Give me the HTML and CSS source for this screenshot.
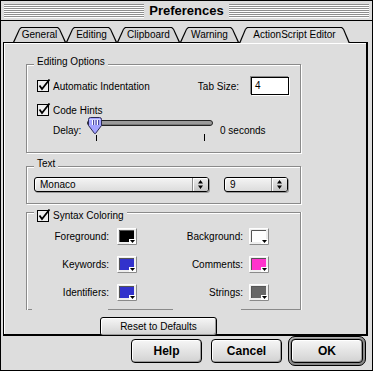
FILE: index.html
```html
<!DOCTYPE html>
<html>
<head>
<meta charset="utf-8">
<title>Preferences</title>
<link rel="stylesheet" href="styles.css">
</head>
<body>
<div class="window">
  <div class="titlebar">
    <div class="stripes"></div>
    <div class="title">Preferences</div>
    <div class="stripes"></div>
  </div>
  <div class="tabbar">
    <div class="tab t-general">General</div>
    <div class="tab t-editing">Editing</div>
    <div class="tab t-clipboard">Clipboard</div>
    <div class="tab t-warning">Warning</div>
    <div class="tab t-as active">ActionScript Editor</div>
  </div>
  <div class="pane">
    <section class="group g-editing">
      <div class="group-title">Editing Options</div>
      <div class="row row1">
        <label class="check">
          <svg class="cb" viewBox="0 0 14 14" width="14" height="14"><rect x="0.5" y="1.5" width="11" height="11" fill="#eeeeee" stroke="#000"/><path d="M2.5 6.5 L5 10 L12.5 0.5" fill="none" stroke="#000" stroke-width="1.8"/></svg>
          <span>Automatic Indentation</span>
        </label>
        <span class="lbl tabsize">Tab Size:</span>
        <span class="field">4</span>
      </div>
      <div class="row row2">
        <label class="check">
          <svg class="cb" viewBox="0 0 14 14" width="14" height="14"><rect x="0.5" y="1.5" width="11" height="11" fill="#eeeeee" stroke="#000"/><path d="M2.5 6.5 L5 10 L12.5 0.5" fill="none" stroke="#000" stroke-width="1.8"/></svg>
          <span>Code Hints</span>
        </label>
      </div>
      <div class="row slider-row">
        <span class="lbl delay">Delay:</span>
        <svg class="slider" viewBox="0 0 128 26" width="128" height="26">
          <rect x="0.5" y="3.5" width="125" height="5" rx="2.5" fill="#9a9a9a" stroke="#222"/>
          <path d="M1.5 7.5 H124" stroke="#777"/>
          <path d="M3.5 0.5 H12.5 Q14.5 0.5 14.5 2.5 V8.5 L8.5 16.5 H7.5 L1.5 8.5 V2.5 Q1.5 0.5 3.5 0.5 Z" fill="#a3a3ff" stroke="#2a2a55"/>
          <path d="M2.5 2.5 H13.5" stroke="#d0d0ff"/>
          <path d="M5.5 3 V8 M8 3 V8 M10.5 3 V8" stroke="#ffffff"/>
          <path d="M6.5 3 V8 M9 3 V8 M11.5 3 V8" stroke="#4a4a99"/>
          <path d="M9.5 18 V24 M117.5 17 V24" stroke="#000"/>
        </svg>
        <span class="lbl secs">0 seconds</span>
      </div>
    </section>

    <section class="group g-text">
      <div class="group-title">Text</div>
      <div class="popups">
        <div class="popup p-font">
          <span class="popup-val">Monaco</span>
          <span class="popup-arrow"><svg viewBox="0 0 5 9" width="5" height="9"><path d="M2.5 0 L5 3.5 H0 Z M0 5.5 H5 L2.5 9 Z" fill="#000"/></svg></span>
        </div>
        <div class="popup p-size">
          <span class="popup-val">9</span>
          <span class="popup-arrow"><svg viewBox="0 0 5 9" width="5" height="9"><path d="M2.5 0 L5 3.5 H0 Z M0 5.5 H5 L2.5 9 Z" fill="#000"/></svg></span>
        </div>
      </div>
    </section>

    <section class="group g-syntax">
      <label class="group-title check">
        <svg class="cb" viewBox="0 0 14 14" width="14" height="14"><rect x="0.5" y="1.5" width="11" height="11" fill="#eeeeee" stroke="#000"/><path d="M2.5 6.5 L5 10 L12.5 0.5" fill="none" stroke="#000" stroke-width="1.8"/></svg>
        <span>Syntax Coloring</span>
      </label>
      <div class="swatches">
        <span class="sw-label">Foreground:</span>
        <svg class="swatch c-black" viewBox="0 0 20 17" width="20" height="17"><rect x="0" y="0" width="20" height="17" fill="#eeeeee"/><path d="M0.5 16.5 V0.5 H19.5" fill="none" stroke="#fff"/><path d="M0.5 16.5 H19.5 V0.5" fill="none" stroke="#8a8a8a"/><rect x="2" y="2" width="15" height="12" fill="currentColor"/><path d="M2.5 14 V2.5 H17" fill="none" stroke="#555"/><rect x="12" y="11" width="7" height="5" fill="#fff"/><path d="M13 12 H18 L15.5 15 Z" fill="#000"/></svg>
        <span class="sw-label">Background:</span>
        <svg class="swatch c-white" viewBox="0 0 20 17" width="20" height="17"><rect x="0" y="0" width="20" height="17" fill="#eeeeee"/><path d="M0.5 16.5 V0.5 H19.5" fill="none" stroke="#fff"/><path d="M0.5 16.5 H19.5 V0.5" fill="none" stroke="#8a8a8a"/><rect x="2" y="2" width="15" height="12" fill="currentColor"/><path d="M2.5 14 V2.5 H17" fill="none" stroke="#555"/><rect x="12" y="11" width="7" height="5" fill="#fff"/><path d="M13 12 H18 L15.5 15 Z" fill="#000"/></svg>
        <span class="sw-label">Keywords:</span>
        <svg class="swatch c-blue" viewBox="0 0 20 17" width="20" height="17"><rect x="0" y="0" width="20" height="17" fill="#eeeeee"/><path d="M0.5 16.5 V0.5 H19.5" fill="none" stroke="#fff"/><path d="M0.5 16.5 H19.5 V0.5" fill="none" stroke="#8a8a8a"/><rect x="2" y="2" width="15" height="12" fill="currentColor"/><path d="M2.5 14 V2.5 H17" fill="none" stroke="#555"/><rect x="12" y="11" width="7" height="5" fill="#fff"/><path d="M13 12 H18 L15.5 15 Z" fill="#000"/></svg>
        <span class="sw-label">Comments:</span>
        <svg class="swatch c-pink" viewBox="0 0 20 17" width="20" height="17"><rect x="0" y="0" width="20" height="17" fill="#eeeeee"/><path d="M0.5 16.5 V0.5 H19.5" fill="none" stroke="#fff"/><path d="M0.5 16.5 H19.5 V0.5" fill="none" stroke="#8a8a8a"/><rect x="2" y="2" width="15" height="12" fill="currentColor"/><path d="M2.5 14 V2.5 H17" fill="none" stroke="#555"/><rect x="12" y="11" width="7" height="5" fill="#fff"/><path d="M13 12 H18 L15.5 15 Z" fill="#000"/></svg>
        <span class="sw-label">Identifiers:</span>
        <svg class="swatch c-blue" viewBox="0 0 20 17" width="20" height="17"><rect x="0" y="0" width="20" height="17" fill="#eeeeee"/><path d="M0.5 16.5 V0.5 H19.5" fill="none" stroke="#fff"/><path d="M0.5 16.5 H19.5 V0.5" fill="none" stroke="#8a8a8a"/><rect x="2" y="2" width="15" height="12" fill="currentColor"/><path d="M2.5 14 V2.5 H17" fill="none" stroke="#555"/><rect x="12" y="11" width="7" height="5" fill="#fff"/><path d="M13 12 H18 L15.5 15 Z" fill="#000"/></svg>
        <span class="sw-label">Strings:</span>
        <svg class="swatch c-gray" viewBox="0 0 20 17" width="20" height="17"><rect x="0" y="0" width="20" height="17" fill="#eeeeee"/><path d="M0.5 16.5 V0.5 H19.5" fill="none" stroke="#fff"/><path d="M0.5 16.5 H19.5 V0.5" fill="none" stroke="#8a8a8a"/><rect x="2" y="2" width="15" height="12" fill="currentColor"/><path d="M2.5 14 V2.5 H17" fill="none" stroke="#555"/><rect x="12" y="11" width="7" height="5" fill="#fff"/><path d="M13 12 H18 L15.5 15 Z" fill="#000"/></svg>
      </div>
    </section>

    <div class="reset-row"><button class="btn reset">Reset to Defaults</button></div>
  </div>
  <div class="footer">
    <button class="btn big b-help">Help</button>
    <button class="btn big b-cancel">Cancel</button>
    <span class="default-ring"><button class="btn big b-ok">OK</button></span>
  </div>
</div>
</body>
</html>
```
FILE: styles.css
```css
* { box-sizing: border-box; }
html, body { margin: 0; padding: 0; }
body {
  width: 373px;
  height: 371px;
  background: #dddddd;
  font-family: "Liberation Sans", Arial, sans-serif;
  font-size: 10px;
  color: #000;
  overflow: hidden;
}
.window {
  width: 373px;
  height: 371px;
  border: 1px solid #000;
  background: #dddddd;
  display: flex;
  flex-direction: column;
}

/* title bar */
.titlebar {
  height: 20px;
  flex: none;
  display: flex;
  align-items: flex-start;
  padding: 3px 3px 0 3px;
  border-bottom: 1px solid #000;
}
.stripes {
  flex: 1;
  height: 14px;
  background: repeating-linear-gradient(to bottom, #8e8e8e 0 1px, #ffffff 1px 2px);
}
.title {
  font-weight: bold;
  font-size: 13px;
  line-height: 14px;
  padding: 0 5px;
}

/* tabs */
.tabbar {
  flex: none;
  height: 21px;
  display: flex;
  align-items: flex-end;
  padding-left: 12px;
}
.tab {
  position: relative;
  isolation: isolate;
  flex: none;
  height: 15px;
  line-height: 15px;
  text-align: center;
  font-size: 10px;
}
.tab::before,
.tab::after {
  content: "";
  position: absolute;
  inset: 0;
  z-index: -1;
}
.tab::before {
  background: #000;
  clip-path: polygon(0 100%, 6px 2px, 8px 0, calc(100% - 8px) 0, calc(100% - 6px) 2px, 100% 100%);
}
.tab::after {
  background: #d6d6d6;
  clip-path: polygon(1.4px 100%, 7px 2.6px, 8.6px 1px, calc(100% - 8.6px) 1px, calc(100% - 7px) 2.6px, calc(100% - 1.4px) 100%);
}
.tab.active {
  height: 16px;
  line-height: 15px;
  margin-bottom: -1px;
  z-index: 1;
}
.tab.active::after { background: #dddddd; }
.t-general { width: 53px; }
.t-editing { width: 51px; }
.t-clipboard { width: 63px; }
.t-warning { width: 59px; }
.t-as { width: 111px; }

/* pane */
.pane {
  flex: none;
  margin: 0 4px 0 2px;
  border-style: solid;
  border-color: #000;
  border-width: 1px 2px 2px 1px;
  box-shadow: inset 1px 1px 0 #ffffff;
  padding: 21px 0 0 22px;
}

.group {
  width: 275px;
  border: 1px solid #8a8a8a;
  box-shadow: 1px 1px 0 #ffffff, inset 1px 1px 0 #ffffff;
}
.group-title {
  width: fit-content;
  margin: -9px 0 0 7px;
  padding: 0 3px;
  background: #dddddd;
  line-height: 12px;
}
.g-editing { padding-bottom: 9px; }
.g-text { margin-top: 13px; padding-bottom: 11px; }
.g-syntax {
  margin-top: 8px;
  padding-bottom: 9px;
  border-bottom: none;
  box-shadow: 1px 0 0 #ffffff, inset 1px 1px 0 #ffffff;
  background:
    linear-gradient(to right, #8a8a8a 0 5px, transparent 5px 81px, #8a8a8a 81px 146px, transparent 146px 214px, #8a8a8a 214px)
    left bottom / 100% 1px no-repeat;
}

.row {
  display: flex;
  align-items: center;
  margin: 0 11px 0 10px;
}
.row1 { height: 18px; margin-top: 9px; }
.row2 { height: 14px; margin-top: 8px; }
.check {
  display: flex;
  align-items: center;
  gap: 2px;
}
.cb { display: block; flex: none; }
.tabsize { margin-left: auto; }
.field {
  width: 38px;
  height: 18px;
  margin-left: 12px;
  border: 1px solid #000;
  background: #fff;
  padding-left: 3px;
  line-height: 16px;
  box-shadow: -1px -1px 0 #8a8a8a, 1px 1px 0 #ffffff;
}
.slider-row {
  align-items: flex-start;
  height: 26px;
}
.delay {
  width: 34px;
  margin: 8px 0 0 16px;
  line-height: 12px;
}
.slider { display: block; flex: none; }
.secs {
  margin: 8px 0 0 5px;
  line-height: 12px;
}

/* popups */
.popups {
  display: flex;
  gap: 15px;
  margin: 7px 0 0 7px;
}
.popup {
  display: flex;
  height: 15px;
  border: 1px solid #000;
  border-radius: 3px;
  background: linear-gradient(#f4f4f4, #dcdcdc);
  box-shadow: 1px 1px 0 #9a9a9a, inset 1px 1px 0 #ffffff;
  overflow: hidden;
}
.p-font { width: 175px; }
.p-size { width: 64px; }
.popup-val {
  flex: 1;
  padding-left: 5px;
  line-height: 13px;
}
.popup-arrow {
  width: 16px;
  flex: none;
  display: flex;
  align-items: center;
  justify-content: center;
  border-left: 1px solid #8a8a8a;
  background: linear-gradient(#ececec, #c4c4c4);
  box-shadow: inset 1px 1px 0 #ffffff;
}
.popup-arrow svg { display: block; }

/* syntax colors */
.g-syntax .group-title {
  margin-top: -4px;
  line-height: 14px;
  display: flex;
}
.swatches {
  display: grid;
  grid-template-columns: 90px 20px 112px 20px;
  grid-auto-rows: 17px;
  row-gap: 11px;
  align-items: center;
  margin-top: 5px;
}
.sw-label {
  text-align: right;
  padding-right: 8px;
  line-height: 12px;
}
.sw-label:nth-child(4n+3) { padding-right: 6px; }
.swatch { display: block; }
.c-black { color: #000000; }
.c-white { color: #ffffff; }
.c-blue { color: #3232cc; }
.c-pink { color: #ff33cc; }
.c-gray { color: #666666; }

/* buttons */
.btn {
  font-family: "Liberation Sans", Arial, sans-serif;
  color: #000;
  border: 1px solid #000;
  border-radius: 4px;
  background: linear-gradient(#f6f6f6, #d2d2d2);
  box-shadow: inset 1px 1px 0 #ffffff, inset -1px -1px 0 #9a9a9a;
  padding: 0;
  display: block;
}
.reset-row {
  margin-top: 7px;
  margin-bottom: -2px;
}
.reset {
  width: 117px;
  height: 19px;
  margin-left: 74px;
  font-size: 10px;
  border-radius: 3px;
}
.footer {
  flex: 1;
  display: flex;
  justify-content: flex-end;
  align-items: flex-start;
  padding-right: 6px;
}
.big {
  width: 71px;
  height: 24px;
  font-size: 12px;
  font-weight: bold;
}
.b-help { margin-top: 3px; }
.b-cancel { margin: 3px 6px 0 9px; }
.default-ring {
  display: block;
  border: 1px solid #000;
  border-radius: 7px;
  padding: 2px;
  background: #8a8a8a;
  box-shadow: inset 1px 1px 0 #b4b4b4;
}
.b-ok { width: 72px; }
```
